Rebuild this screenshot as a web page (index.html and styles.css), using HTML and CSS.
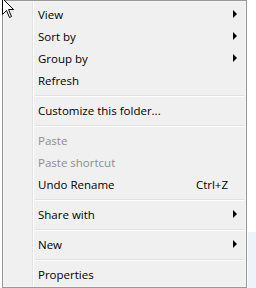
FILE: index.html
```html
<!DOCTYPE html>
<html>
<head>
<meta charset="utf-8">
<link rel="stylesheet" href="styles.css">
</head>
<body>
<div class="screen">
  <div class="backdrop"></div>
  <div class="menu">
    <div class="item sub"><span class="label">View</span><span class="arrow"></span></div>
    <div class="item sub"><span class="label">Sort by</span><span class="arrow"></span></div>
    <div class="item sub"><span class="label">Group by</span><span class="arrow"></span></div>
    <div class="item"><span class="label">Refresh</span></div>
    <div class="sep"></div>
    <div class="item"><span class="label">Customize this folder...</span></div>
    <div class="sep"></div>
    <div class="item disabled"><span class="label">Paste</span></div>
    <div class="item disabled"><span class="label">Paste shortcut</span></div>
    <div class="item"><span class="label">Undo Rename</span><span class="shortcut">Ctrl+Z</span></div>
    <div class="sep"></div>
    <div class="item sub"><span class="label">Share with</span><span class="arrow"></span></div>
    <div class="sep"></div>
    <div class="item sub"><span class="label">New</span><span class="arrow"></span></div>
    <div class="sep"></div>
    <div class="item"><span class="label">Properties</span></div>
  </div>
  <svg class="cursor" width="13" height="21" viewBox="0 0 13 21">
    <path d="M0.5,0.5 L0.5,16.5 L4.5,12.5 L7.5,19.5 L9.5,18.5 L6.5,11.5 L11.5,11.5 Z" fill="#fff" stroke="#000" stroke-width="1" stroke-linejoin="miter"/>
  </svg>
</div>
</body>
</html>
```
FILE: styles.css
```css
html, body {
  margin: 0;
  padding: 0;
  background: #ffffff;
}
.screen {
  position: relative;
  width: 256px;
  height: 288px;
  overflow: hidden;
  font-family: "Open Sans", "Noto Sans", sans-serif;
  font-size: 11.5px;
}
.backdrop {
  position: absolute;
  left: 248px;
  top: 232px;
  width: 8px;
  height: 56px;
  background: #eef2fa;
}
.menu {
  position: relative;
  margin-left: 2px;
  border: 1px solid #979797;
  padding: 2px;
  box-sizing: border-box;
  height: 288px;
  width: 245px;
  background-color: #f0f0f0;
  background-image:
    linear-gradient(to right, transparent 29px, #e2e3e3 29px, #e2e3e3 30px, #ffffff 30px, #ffffff 31px, transparent 31px);
  box-shadow: inset 1px 1px 0 #f5f5f5, inset -1px -1px 0 #f5f5f5;
  display: flex;
  flex-direction: column;
}
.item {
  height: 22px;
  flex: none;
  display: flex;
  align-items: center;
  padding-left: 33px;
  color: #000;
}
.item.disabled {
  color: #8d8d8d;
}
.label {
  white-space: nowrap;
}
.arrow {
  margin-left: auto;
  margin-right: 7px;
  width: 0;
  height: 0;
  border-top: 4px solid transparent;
  border-bottom: 4px solid transparent;
  border-left: 4px solid #000;
}
.shortcut {
  margin-left: auto;
  margin-right: 16px;
}
.sep {
  flex: none;
  height: 8px;
  margin-left: 30px;
  box-sizing: border-box;
  padding-top: 4px;
}
.sep::before {
  content: "";
  display: block;
  height: 1px;
  background: #e0e0e0;
  border-bottom: 1px solid #ffffff;
}
.cursor {
  position: absolute;
  left: 2px;
  top: -2px;
}
```
